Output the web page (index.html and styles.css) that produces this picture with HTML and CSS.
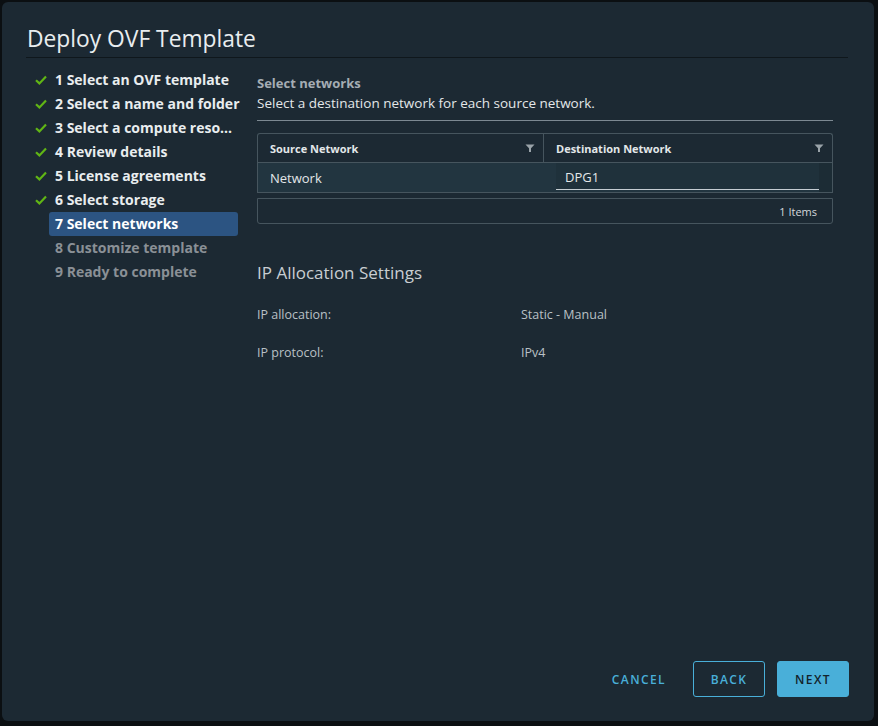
FILE: index.html
```html
<!DOCTYPE html>
<html>
<head>
<meta charset="utf-8">
<link rel="stylesheet" href="styles.css">
</head>
<body>
<div class="dialog">
  <div class="dialog-header">
    <h1 class="dialog-title">Deploy OVF Template</h1>
  </div>
  <div class="dialog-body">
    <ul class="steps">
      <li class="step done"><svg class="check" viewBox="0 0 12 10"><polyline points="1,5.2 4.4,8.4 11,1.6" /></svg><span class="step-label">1 Select an OVF template</span></li>
      <li class="step done"><svg class="check" viewBox="0 0 12 10"><polyline points="1,5.2 4.4,8.4 11,1.6" /></svg><span class="step-label">2 Select a name and folder</span></li>
      <li class="step done"><svg class="check" viewBox="0 0 12 10"><polyline points="1,5.2 4.4,8.4 11,1.6" /></svg><span class="step-label">3 Select a compute reso...</span></li>
      <li class="step done"><svg class="check" viewBox="0 0 12 10"><polyline points="1,5.2 4.4,8.4 11,1.6" /></svg><span class="step-label">4 Review details</span></li>
      <li class="step done"><svg class="check" viewBox="0 0 12 10"><polyline points="1,5.2 4.4,8.4 11,1.6" /></svg><span class="step-label">5 License agreements</span></li>
      <li class="step done"><svg class="check" viewBox="0 0 12 10"><polyline points="1,5.2 4.4,8.4 11,1.6" /></svg><span class="step-label">6 Select storage</span></li>
      <li class="step active"><span class="check-space"></span><span class="step-label">7 Select networks</span></li>
      <li class="step pending"><span class="check-space"></span><span class="step-label">8 Customize template</span></li>
      <li class="step pending"><span class="check-space"></span><span class="step-label">9 Ready to complete</span></li>
    </ul>
    <div class="content">
      <div class="content-head">
        <div class="section-kicker">Select networks</div>
        <div class="section-desc">Select a destination network for each source network.</div>
      </div>
      <div class="grid">
        <div class="grid-row grid-header">
          <div class="cell col-src">Source Network<svg class="filter" viewBox="0 0 10 10"><path d="M0.5 1.5 H9.5 L6 5.2 V9 H4 V5.2 Z"/></svg></div>
          <div class="cell col-dst">Destination Network<svg class="filter" viewBox="0 0 10 10"><path d="M0.5 1.5 H9.5 L6 5.2 V9 H4 V5.2 Z"/></svg></div>
        </div>
        <div class="grid-row grid-data">
          <div class="cell col-src">Network</div>
          <div class="cell col-dst"><div class="select-input">DPG1</div></div>
          <div class="scroll-gap"></div>
        </div>
      </div>
      <div class="grid-footer">1 Items</div>

      <h2 class="ip-title">IP Allocation Settings</h2>
      <div class="kv">
        <div class="kv-label">IP allocation:</div>
        <div class="kv-value">Static - Manual</div>
        <div class="kv-label">IP protocol:</div>
        <div class="kv-value">IPv4</div>
      </div>
    </div>
  </div>
  <div class="dialog-footer">
    <button class="btn btn-link">CANCEL</button>
    <button class="btn btn-outline">BACK</button>
    <button class="btn btn-primary">NEXT</button>
  </div>
</div>
</body>
</html>
```
FILE: styles.css
```css
html, body {
  margin: 0;
  padding: 0;
  background: #0b0f12;
}
body {
  font-family: "Open Sans", "Liberation Sans", sans-serif;
  width: 878px;
  height: 726px;
  overflow: hidden;
}
.dialog {
  margin: 2px 0 0 2px;
  width: 872px;
  height: 719px;
  background: #1c2933;
  border-radius: 6px;
  display: flex;
  flex-direction: column;
  box-sizing: border-box;
  padding: 22px 26px 24px 24px;
}
.dialog-header {
  border-bottom: 1px solid #0f171c;
  padding: 0 0 3px 1px;
}
.dialog-title {
  margin: 0;
  font-size: 22.8px;
  line-height: 30px;
  font-weight: 400;
  color: #e9edef;
}
.dialog-body {
  flex: 1;
  display: flex;
  gap: 19px;
  padding-top: 10px;
}
.steps {
  list-style: none;
  margin: 0;
  padding: 0;
  width: 212px;
  flex: none;
}
.step {
  display: flex;
  align-items: center;
  height: 24px;
}
.check, .check-space {
  width: 12px;
  height: 10px;
  margin: 0 11px 0 9px;
  flex: none;
}
.check polyline {
  fill: none;
  stroke: #60b515;
  stroke-width: 2.2;
}
.step-label {
  flex: 1;
  height: 24px;
  line-height: 24px;
  padding-left: 6px;
  margin-left: -9px;
  font-size: 14px;
  font-weight: 700;
  color: #e9edef;
  border-radius: 3px;
  white-space: nowrap;
}
.step.active .step-label {
  background: #2c5482;
  color: #ffffff;
}
.step.pending .step-label {
  color: #8a9096;
}
.content {
  flex: none;
  width: 576px;
  padding-top: 5px;
}
.content-head {
  border-bottom: 1px solid #7d8992;
  padding-bottom: 6px;
}
.section-kicker {
  font-size: 13px;
  font-weight: 700;
  line-height: 20px;
  color: #a5adb4;
}
.section-desc {
  font-size: 13.5px;
  line-height: 21px;
  color: #e3e7e9;
}
.grid {
  margin-top: 12px;
  border: 1px solid #46555e;
  border-bottom: none;
  border-radius: 3px 3px 0 0;
}
.grid-row {
  display: flex;
}
.grid-header {
  height: 28px;
  border-bottom: 1px solid #46555e;
}
.cell {
  display: flex;
  align-items: center;
  box-sizing: border-box;
}
.grid-header .cell {
  font-size: 11px;
  font-weight: 700;
  color: #e3e7e9;
  justify-content: space-between;
  padding: 0 8px 0 12px;
}
.col-src {
  width: 286px;
  flex: none;
  border-right: 1px solid #46555e;
}
.grid-header .col-dst {
  flex: 1;
}
.filter {
  width: 10px;
  height: 10px;
  fill: #9aa3a9;
}
.grid-data {
  height: 29px;
  background: #223540;
  border-bottom: 1px solid #46555e;
}
.grid-data .cell {
  font-size: 13px;
  color: #e3e7e9;
}
.grid-data .col-src {
  padding-left: 12px;
  border-right: none;
}
.grid-data .col-dst {
  flex: 1;
  padding-left: 12px;
  align-items: stretch;
}
.select-input {
  flex: 1;
  background: #1f313b;
  border-bottom: 1px solid #c5cdd2;
  margin: 0 0 2px 0;
  display: flex;
  align-items: center;
  padding-left: 9px;
  padding-top: 2px;
}
.scroll-gap {
  width: 13px;
  background: #1c2c35;
}
.grid-footer {
  margin-top: 5px;
  height: 24px;
  border: 1px solid #46555e;
  border-radius: 0 0 3px 3px;
  font-size: 11px;
  color: #d3d8db;
  display: flex;
  align-items: center;
  justify-content: flex-end;
  padding-right: 15px;
}
.ip-title {
  margin: 37px 0 0 0;
  font-size: 17px;
  line-height: 24px;
  font-weight: 400;
  color: #c9ced2;
}
.kv {
  display: grid;
  grid-template-columns: 264px 1fr;
  row-gap: 18px;
  margin-top: 20px;
  font-size: 12.5px;
  line-height: 20px;
  color: #b9c0c5;
}
.dialog-footer {
  display: flex;
  justify-content: flex-end;
  align-items: center;
  gap: 12px;
  margin-right: -1px;
}
.btn {
  height: 36px;
  min-width: 72px;
  box-sizing: border-box;
  border-radius: 3px;
  font-family: "Open Sans", "Liberation Sans", sans-serif;
  font-size: 12px;
  font-weight: 600;
  letter-spacing: 1.4px;
  background: transparent;
  padding: 0 12px;
  cursor: pointer;
}
.btn-link {
  border: 1px solid transparent;
  color: #49afd9;
  margin-right: 2px;
}
.btn-outline {
  border: 1px solid #49afd9;
  color: #49afd9;
}
.btn-primary {
  border: 1px solid #49afd9;
  background: #49afd9;
  color: #13232b;
}
```
